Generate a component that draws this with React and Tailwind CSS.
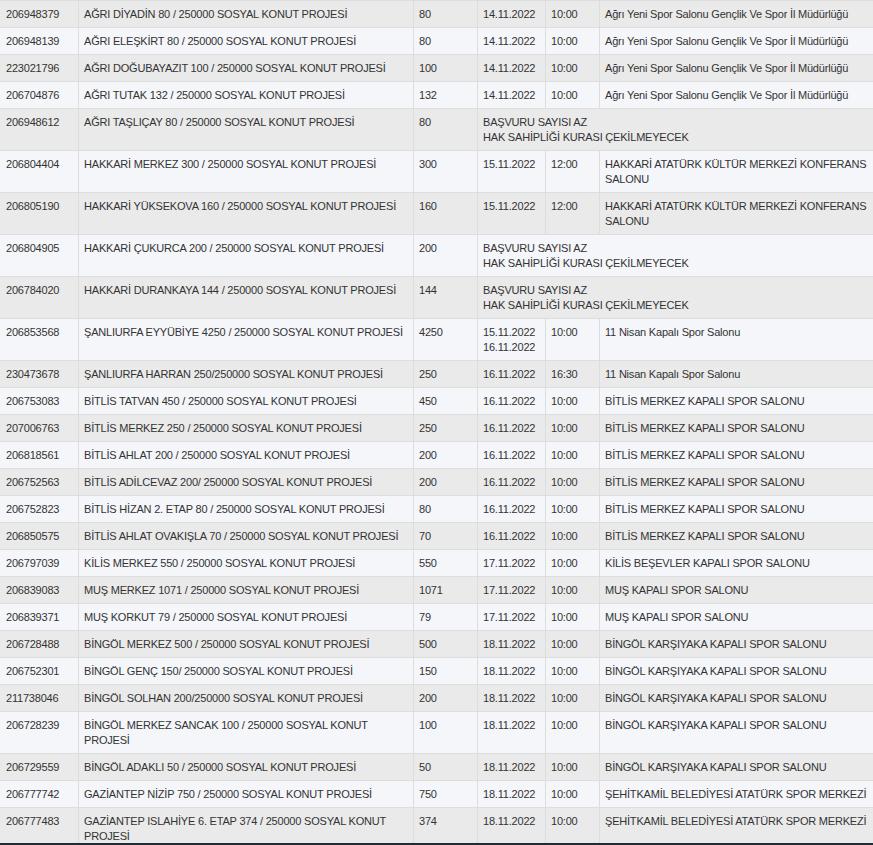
const SAME = 'BAŞVURU';

const rows = [
  ['206948379', 'AĞRI DİYADİN 80 / 250000 SOSYAL KONUT PROJESİ', '80', '14.11.2022', '10:00', 'Ağrı Yeni Spor Salonu Gençlik Ve Spor İl Müdürlüğü'],
  ['206948139', 'AĞRI ELEŞKİRT 80 / 250000 SOSYAL KONUT PROJESİ', '80', '14.11.2022', '10:00', 'Ağrı Yeni Spor Salonu Gençlik Ve Spor İl Müdürlüğü'],
  ['223021796', 'AĞRI DOĞUBAYAZIT 100 / 250000 SOSYAL KONUT PROJESİ', '100', '14.11.2022', '10:00', 'Ağrı Yeni Spor Salonu Gençlik Ve Spor İl Müdürlüğü'],
  ['206704876', 'AĞRI TUTAK 132 / 250000 SOSYAL KONUT PROJESİ', '132', '14.11.2022', '10:00', 'Ağrı Yeni Spor Salonu Gençlik Ve Spor İl Müdürlüğü'],
  ['206948612', 'AĞRI TAŞLIÇAY 80 / 250000 SOSYAL KONUT PROJESİ', '80', SAME],
  ['206804404', 'HAKKARİ MERKEZ 300 / 250000 SOSYAL KONUT PROJESİ', '300', '15.11.2022', '12:00', 'HAKKARİ ATATÜRK KÜLTÜR MERKEZİ KONFERANS SALONU'],
  ['206805190', 'HAKKARİ YÜKSEKOVA 160 / 250000 SOSYAL KONUT PROJESİ', '160', '15.11.2022', '12:00', 'HAKKARİ ATATÜRK KÜLTÜR MERKEZİ KONFERANS SALONU'],
  ['206804905', 'HAKKARİ ÇUKURCA 200 / 250000 SOSYAL KONUT PROJESİ', '200', SAME],
  ['206784020', 'HAKKARİ DURANKAYA 144 / 250000 SOSYAL KONUT PROJESİ', '144', SAME],
  ['206853568', 'ŞANLIURFA EYYÜBİYE 4250 / 250000 SOSYAL KONUT PROJESİ', '4250', ['15.11.2022', '16.11.2022'], '10:00', '11 Nisan Kapalı Spor Salonu'],
  ['230473678', 'ŞANLIURFA HARRAN 250/250000 SOSYAL KONUT PROJESİ', '250', '16.11.2022', '16:30', '11 Nisan Kapalı Spor Salonu'],
  ['206753083', 'BİTLİS TATVAN 450 / 250000 SOSYAL KONUT PROJESİ', '450', '16.11.2022', '10:00', 'BİTLİS MERKEZ KAPALI SPOR SALONU'],
  ['207006763', 'BİTLİS MERKEZ 250 / 250000 SOSYAL KONUT PROJESİ', '250', '16.11.2022', '10:00', 'BİTLİS MERKEZ KAPALI SPOR SALONU'],
  ['206818561', 'BİTLİS AHLAT 200 / 250000 SOSYAL KONUT PROJESİ', '200', '16.11.2022', '10:00', 'BİTLİS MERKEZ KAPALI SPOR SALONU'],
  ['206752563', 'BİTLİS ADİLCEVAZ 200/ 250000 SOSYAL KONUT PROJESİ', '200', '16.11.2022', '10:00', 'BİTLİS MERKEZ KAPALI SPOR SALONU'],
  ['206752823', 'BİTLİS HİZAN 2. ETAP 80 / 250000 SOSYAL KONUT PROJESİ', '80', '16.11.2022', '10:00', 'BİTLİS MERKEZ KAPALI SPOR SALONU'],
  ['206850575', 'BİTLİS AHLAT OVAKIŞLA 70 / 250000 SOSYAL KONUT PROJESİ', '70', '16.11.2022', '10:00', 'BİTLİS MERKEZ KAPALI SPOR SALONU'],
  ['206797039', 'KİLİS MERKEZ 550 / 250000 SOSYAL KONUT PROJESİ', '550', '17.11.2022', '10:00', 'KİLİS BEŞEVLER KAPALI SPOR SALONU'],
  ['206839083', 'MUŞ MERKEZ 1071 / 250000 SOSYAL KONUT PROJESİ', '1071', '17.11.2022', '10:00', 'MUŞ KAPALI SPOR SALONU'],
  ['206839371', 'MUŞ KORKUT 79 / 250000 SOSYAL KONUT PROJESİ', '79', '17.11.2022', '10:00', 'MUŞ KAPALI SPOR SALONU'],
  ['206728488', 'BİNGÖL MERKEZ 500 / 250000 SOSYAL KONUT PROJESİ', '500', '18.11.2022', '10:00', 'BİNGÖL KARŞIYAKA KAPALI SPOR SALONU'],
  ['206752301', 'BİNGÖL GENÇ 150/ 250000 SOSYAL KONUT PROJESİ', '150', '18.11.2022', '10:00', 'BİNGÖL KARŞIYAKA KAPALI SPOR SALONU'],
  ['211738046', 'BİNGÖL SOLHAN 200/250000 SOSYAL KONUT PROJESİ', '200', '18.11.2022', '10:00', 'BİNGÖL KARŞIYAKA KAPALI SPOR SALONU'],
  ['206728239', 'BİNGÖL MERKEZ SANCAK 100 / 250000 SOSYAL KONUT PROJESİ', '100', '18.11.2022', '10:00', 'BİNGÖL KARŞIYAKA KAPALI SPOR SALONU'],
  ['206729559', 'BİNGÖL ADAKLI 50 / 250000 SOSYAL KONUT PROJESİ', '50', '18.11.2022', '10:00', 'BİNGÖL KARŞIYAKA KAPALI SPOR SALONU'],
  ['206777742', 'GAZİANTEP NİZİP 750 / 250000 SOSYAL KONUT PROJESİ', '750', '18.11.2022', '10:00', 'ŞEHİTKAMİL BELEDİYESİ ATATÜRK SPOR MERKEZİ'],
  ['206777483', 'GAZİANTEP ISLAHİYE 6. ETAP 374 / 250000 SOSYAL KONUT PROJESİ', '374', '18.11.2022', '10:00', 'ŞEHİTKAMİL BELEDİYESİ ATATÜRK SPOR MERKEZİ'],
];

const pad = 'pt-[6px] pb-[5px] px-[5px]';
const cell = `border-r border-[#dddddd] ${pad}`;

function Row({ r, i }) {
  const bg = i % 2 === 0 ? 'bg-[#eaeaea]' : 'bg-[#f5f6fa]';
  const [id, name, count, date, time, place] = r;
  return (
    <div className={`grid grid-cols-[79px_335px_64px_68px_54px_1fr] border-b border-[#dddddd] ${bg}`}>
      <div className={`${cell} pl-[6px]`}>{id}</div>
      <div className={cell}>{name}</div>
      <div className={cell}>{count}</div>
      {date === SAME ? (
        <div className={`col-span-3 ${pad}`}>
          BAŞVURU SAYISI AZ
          <br />
          HAK SAHİPLİĞİ KURASI ÇEKİLMEYECEK
        </div>
      ) : (
        <>
          <div className={cell}>
            {Array.isArray(date) ? date.map((d) => <div key={d}>{d}</div>) : date}
          </div>
          <div className={cell}>{time}</div>
          <div className={`${pad} pr-[2px]`}>{place}</div>
        </>
      )}
    </div>
  );
}

export default function App() {
  return (
    <div className="w-[873px] h-[845px] flex flex-col bg-[#f5f6fa]">
      <div className="h-[843px] overflow-hidden border-t border-[#dddddd] text-[11px] leading-[15px] tracking-[-0.2px] text-[#333333] font-['Liberation_Sans',Arial,sans-serif]">
        {rows.map((r, i) => (
          <Row key={r[0]} r={r} i={i} />
        ))}
      </div>
      <div className="h-[2px] bg-[#1e2b35]" />
    </div>
  );
}
